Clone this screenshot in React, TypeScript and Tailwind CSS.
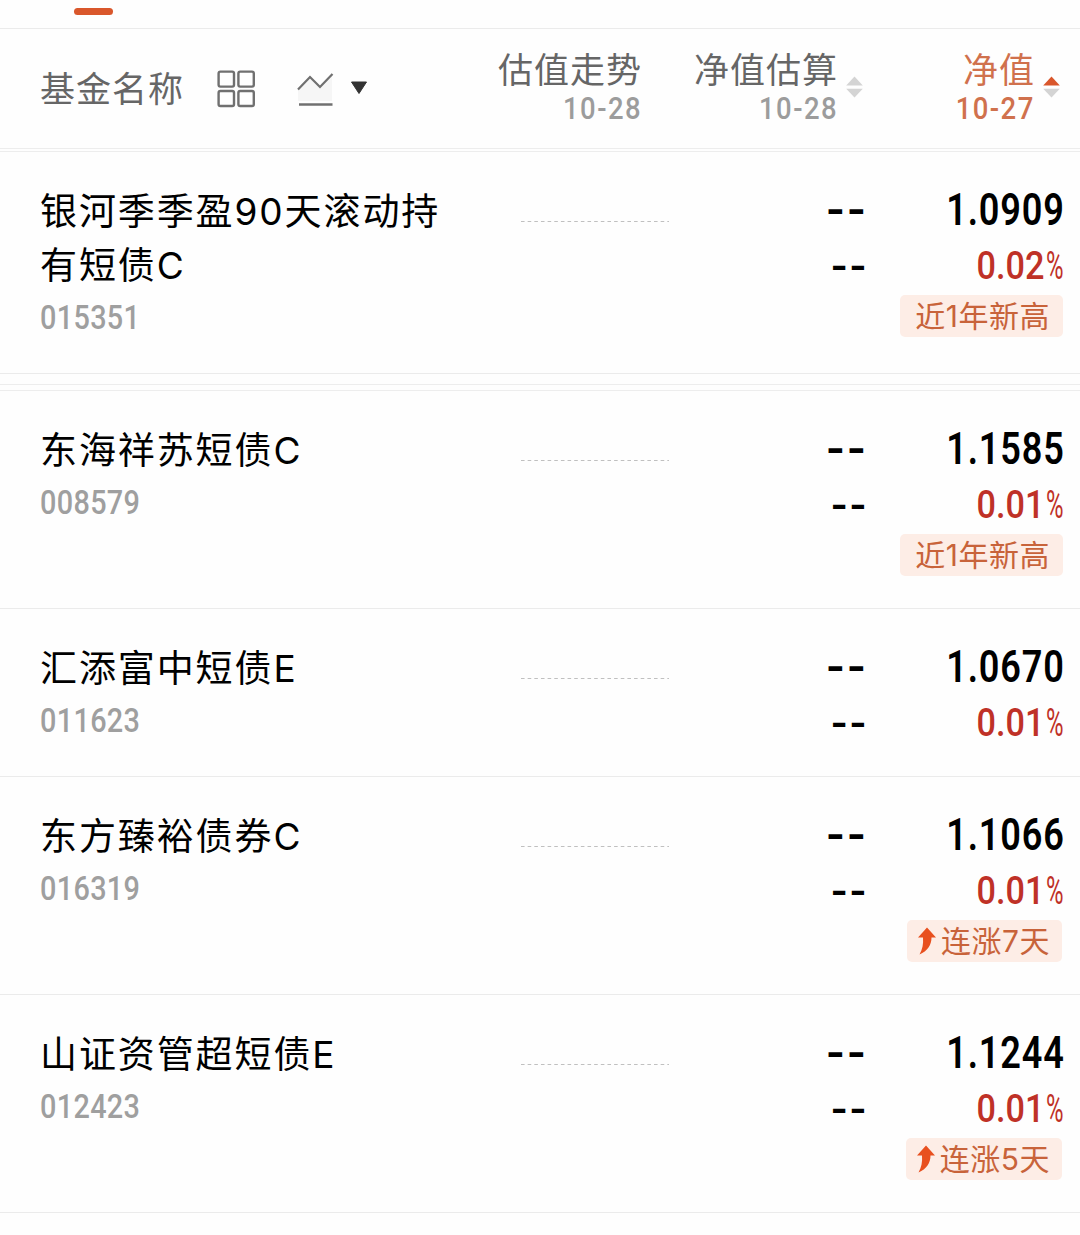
import React from 'react';

interface Fund {
  name: string;
  code: string;
  value: string;
  change: string;
  tag?: string;
  rising?: boolean;
}

const pinned: Fund[] = [
  { name: '银河季季盈90天滚动持有短债C', code: '015351', value: '1.0909', change: '0.02', tag: '近1年新高' }
];

const funds: Fund[] = [
  { name: '东海祥苏短债C', code: '008579', value: '1.1585', change: '0.01', tag: '近1年新高' },
  { name: '汇添富中短债E', code: '011623', value: '1.0670', change: '0.01' },
  { name: '东方臻裕债券C', code: '016319', value: '1.1066', change: '0.01', tag: '连涨7天', rising: true },
  { name: '山证资管超短债E', code: '012423', value: '1.1244', change: '0.01', tag: '连涨5天', rising: true }
];

const SortArrows: React.FC<{ active?: boolean }> = ({ active }) => (
  <svg className="ml-[9px] mt-[26px] h-[22px] w-[17px] shrink-0" viewBox="0 0 17 22">
    <path d="M8.5 0.5 L16.8 9.5 H0.2 Z" fill={active ? '#d9562b' : '#d4d4d4'} />
    <path d="M0.2 12.8 H16.8 L8.5 21.5 Z" fill="#d4d4d4" />
  </svg>
);

const HeaderCell: React.FC<{ title: string; date: string; active?: boolean }> = ({ title, date, active }) => (
  <div className={`text-right ${active ? 'text-[#d0714d]' : 'text-[#666]'}`}>
    <div className="-mr-px text-[35px] leading-[40px] tracking-[1px]">{title}</div>
    <div
      className={`-mr-px origin-right scale-x-[0.9] font-[Roboto] text-[30.5px] font-medium leading-[38px] tracking-[1.6px] ${
        active ? '' : 'text-[#9c9c9c]'
      }`}
    >
      {date}
    </div>
  </div>
);

const Header = () => (
  <div className="grid h-[120px] grid-cols-[400px_229px_196px_198px] border-b border-[#ededed] pl-10 pt-[21px]">
    <div className="flex h-[78px] items-center text-[#666]">
      <span className="text-[35px] tracking-[1px]">基金名称</span>
      <svg className="ml-[33px] h-[38px] w-[39px]" viewBox="0 0 39 38" fill="none" stroke="#707070" strokeWidth="2.4">
        <rect x="1.6" y="1.6" width="15.4" height="15" rx="1.8" />
        <rect x="21.4" y="1.6" width="15.4" height="15" rx="1.8" />
        <rect x="1.6" y="21" width="15.4" height="15" rx="1.8" />
        <rect x="21.4" y="21" width="15.4" height="15" rx="1.8" />
      </svg>
      <svg className="ml-[41px] h-[38px] w-[38px]" viewBox="0 0 38 38" fill="none">
        <path d="M1 18 L13 6 L23 16 L35 3 V31 H1 Z" fill="#f6f6f6" />
        <path d="M1 19.5 L13 7 L23 17 L35.5 4" stroke="#707070" strokeWidth="2.2" />
        <path d="M2 34.5 H35.5" stroke="#707070" strokeWidth="2.4" />
      </svg>
      <svg className="-mt-[2px] ml-[15px] h-[14px] w-[18px]" viewBox="0 0 18 14">
        <path d="M1.5 1 H16.5 L9 12.5 Z" fill="#333" stroke="#333" strokeLinejoin="round" />
      </svg>
    </div>
    <div className="pr-[28px]">
      <HeaderCell title="估值走势" date="10-28" />
    </div>
    <div className="flex justify-end pr-[2px]">
      <HeaderCell title="净值估算" date="10-28" />
      <SortArrows />
    </div>
    <div className="flex justify-end pr-[3px]">
      <HeaderCell title="净值" date="10-27" active />
      <SortArrows active />
    </div>
  </div>
);

const RiseIcon = () => (
  <svg className="mr-1 h-[28px] w-[20px]" viewBox="0 0 20 28">
    <path d="M10 0.5 L19 10.5 H14.5 C14.5 18 10.5 24 2.5 27.5 C5.5 22 6.5 17 6 10.5 H1 Z" fill="#e8501f" />
  </svg>
);

const FundRow: React.FC<{ fund: Fund }> = ({ fund }) => (
  <div className="grid grid-cols-[400px_229px_196px_198px] border-b border-[#ebebeb] pb-6 pl-10 pt-[33px]">
    <div className="pb-1">
      <div className="-mr-2 text-[37px] leading-[54px] tracking-[1.9px] text-black">{fund.name}</div>
      <div className="-mt-px mb-px origin-left scale-x-[0.86] font-[Roboto] text-[33.5px] font-medium leading-[52px] tracking-[0.4px] text-[#9f9f9f]">
        {fund.code}
      </div>
    </div>

    {/* Flat trend line, no estimate available */}
    <div className="flex justify-end pt-[35px]">
      <svg className="h-[2px] w-[149px]" viewBox="0 0 149 2">
        <path d="M1 1.5 H149" stroke="#c0c0c0" strokeWidth="1" strokeDasharray="3.6 3.05" />
      </svg>
    </div>

    <div className="-mr-[3px] -mt-[3px] text-right font-[Inter] font-bold text-black">
      <div className="text-[41px] leading-[54px] tracking-[2px]">--</div>
      <div className="mt-[2px] text-[37px] leading-[56px] tracking-[1.5px]">--</div>
    </div>

    <div className="-mt-px flex flex-col items-end whitespace-nowrap font-[Roboto] font-medium">
      <div className="-mr-[2px] origin-right scale-x-[0.83] text-[43.5px] font-semibold leading-[54px] tracking-[1px] text-black">
        {fund.value}
      </div>
      <div className="flex origin-right scale-x-[0.9] items-baseline text-[38px] leading-[56px] text-[#bf3127]">
        <span>{fund.change}</span>
        <span className="-mr-[9px] ml-[2px] origin-left scale-x-[0.7] font-normal">%</span>
      </div>
      {fund.tag && (
        <div
          className={`mb-2 mt-px flex h-[42px] items-center rounded-[5px] bg-[#fdede6] font-['Inter','Noto_Sans_CJK_SC',sans-serif] text-[30px] font-normal leading-[42px] tracking-[0.5px] text-[#c8633a] ${
            fund.rising ? 'mr-px pl-[10px] pr-3' : 'pl-[15px] pr-[13px]'
          }`}
        >
          {fund.rising && <RiseIcon />}
          <span className="-mt-px">{fund.tag}</span>
        </div>
      )}
    </div>
  </div>
);

const App: React.FC = () => {
  return (
    <div className="min-h-[1235px] w-[1080px] bg-[#fefefe] font-['Inter','Noto_Sans_CJK_SC',sans-serif]">
      {/* Active tab indicator */}
      <div className="flex h-[29px] border-b border-[#ebebeb] pl-[74px] pt-2">
        <div className="h-[7px] w-[39px] rounded-full bg-[#d9572c]" />
      </div>
      <Header />
      <div className="mt-[2px] border-t border-[#ededed]">
        {pinned.map((fund) => (
          <FundRow key={fund.code} fund={fund} />
        ))}
      </div>
      <div className="mt-[10px] h-[7px] border-y border-[#ededed]" />
      {funds.map((fund) => (
        <FundRow key={fund.code} fund={fund} />
      ))}
    </div>
  );
};

export default App;
